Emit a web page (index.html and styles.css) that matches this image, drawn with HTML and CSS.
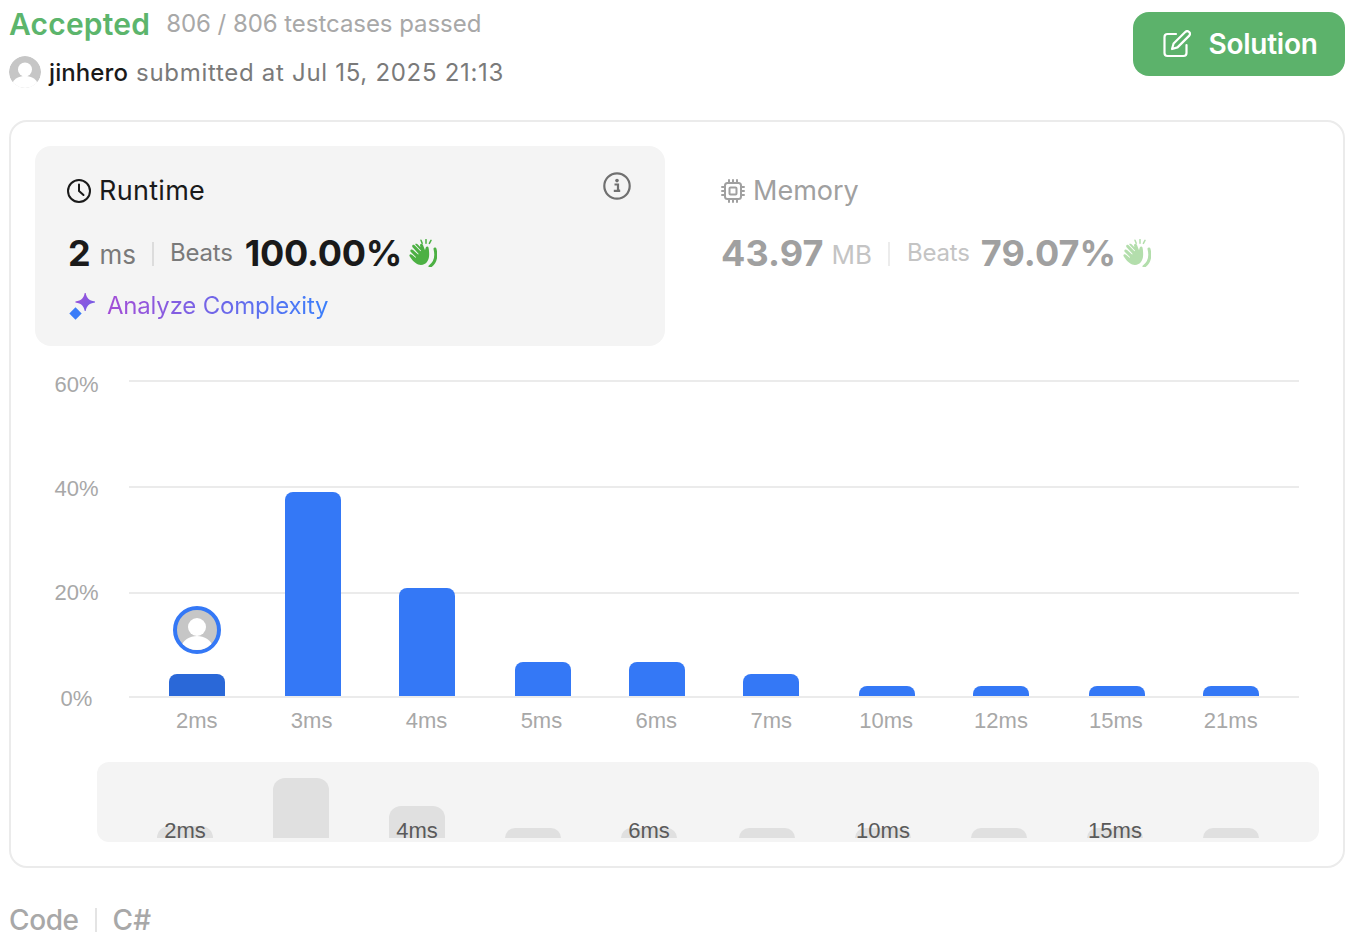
FILE: index.html
```html
<!DOCTYPE html>
<html lang="en">
<head>
<meta charset="utf-8">
<title>Submission</title>
<link rel="stylesheet" href="styles.css">
</head>
<body>
<svg class="defs" width="0" height="0" aria-hidden="true">
  <defs>
    <symbol id="clap" viewBox="0 0 28 28">
      <g fill="none" stroke="currentColor" stroke-linecap="round">
        <path d="M12 1.200l1.200 3M17 .6v3.600M22 1.400l-1.600 3" stroke-width="1.500"/>
        <path d="M26 10c1.500 6 1 13-5 17.400" stroke-width="3"/>
      </g>
      <path fill="currentColor" d="M6.400 5.300c.7-.7 1.700-.5 2.400.2l2.700 2.800-.4-1.600c-.3-1.100.3-1.900 1.100-2 .9-.2 1.400.4 1.800 1.400l2 5.200c.4-1.400.5-2.500 1-3.300.6-.8 2.200-.8 2.500.4.500 2.300.8 5.600.6 8.300-.3 4.300-2.600 9.200-8.200 9.200-3.800 0-6.300-2.500-8.600-4.900L.9 17.800c-.7-.8-.7-1.700 0-2.300.6-.5 1.400-.4 2.100.2l3.600 3.100.5-.5-5.200-5.200c-.7-.8-.8-1.700-.1-2.300.7-.6 1.500-.5 2.300.2l5 4.600.6-.6-5.900-6.400c-.7-.8-.9-1.800-.2-2.500.7-.6 1.600-.5 2.300.3l5.600 5.900.6-.5-5.400-5.900c-.4-.5-.7-.9-.3-1.600z"/>
    </symbol>
  </defs>
</svg>

<header class="head">
  <div class="head-text">
    <div class="status-row">
      <span class="accepted">Accepted</span>
      <span class="passed">806 / 806 testcases passed</span>
    </div>
    <div class="user-row">
      <svg class="avatar" viewBox="0 0 32 32" aria-hidden="true">
        <circle cx="16" cy="16" r="16" fill="#c6c6c6"/>
        <circle cx="16" cy="13.500" r="7" fill="#fff"/>
        <path d="M3 28c2-6 8-8 13-8s11 2 13 8c-3 2.500-8 4-13 4s-10-1.500-13-4z" fill="#fff"/>
      </svg>
      <span class="user">jinhero</span>
      <span class="submitted">submitted at Jul 15, 2025 21:13</span>
    </div>
  </div>
  <button class="solution" type="button">
    <svg class="solution-icon" viewBox="0 0 28 28" fill="none" stroke="#fff" stroke-width="2.200" stroke-linecap="round" stroke-linejoin="round" aria-hidden="true">
      <path d="M13 4H4.500A3 3 0 0 0 1.500 7v16a3 3 0 0 0 3 3h16a3 3 0 0 0 3-3v-8"/>
      <path d="M22.500 1.800a2.700 2.700 0 0 1 3.800 3.800L14.500 17.400 9 19l1.600-5.500z"/>
    </svg>
    <span>Solution</span>
  </button>
</header>

<main class="card">
  <section class="stats">
    <div class="stat stat-active">
      <div class="stat-title">
        <svg class="title-icon" viewBox="0 0 24 24" fill="none" stroke="currentColor" stroke-width="2" stroke-linecap="round" stroke-linejoin="round" aria-hidden="true">
          <circle cx="12" cy="12" r="11"/>
          <path d="M12 5.500V12l4.500 4"/>
        </svg>
        <span>Runtime</span>
        <svg class="info" viewBox="0 0 28 28" fill="none" aria-hidden="true">
          <circle cx="14" cy="14" r="12.700" stroke="#707070" stroke-width="2.200"/>
          <circle cx="14" cy="8.600" r="1.800" fill="#707070"/>
          <path d="M11.500 12.500h3.500v6.200h2M10.800 18.900h6.400" stroke="#707070" stroke-width="2.200"/>
        </svg>
      </div>
      <div class="stat-values">
        <span class="num">2</span>
        <span class="unit">ms</span>
        <span class="sep"></span>
        <span class="beats">Beats</span>
        <span class="num">100.00%</span>
        <svg class="clap" aria-hidden="true"><use href="#clap"/></svg>
      </div>
      <a class="analyze" href="#">
        <svg class="spark" viewBox="0 0 28 28" aria-hidden="true">
          <defs>
            <linearGradient id="sparkA" x1="0" y1="0" x2="1" y2="1">
              <stop offset="0" stop-color="#a351d8"/>
              <stop offset="1" stop-color="#6a5ee8"/>
            </linearGradient>
          </defs>
          <path d="M16.700 0c.9 4.600 3 7.600 9.300 8.500v1c-6.300.9-8.400 3.900-9.300 8.500h-1c-.9-4.600-3-7.600-9.300-8.500v-1c6.300-.9 8.400-3.900 9.300-8.500z" fill="url(#sparkA)"/>
          <path d="M6.500 14.200l6.200 6.300-6.200 6.300L.3 20.500z" fill="#3a7cf8"/>
        </svg>
        <span class="analyze-text">Analyze Complexity</span>
      </a>
    </div>
    <div class="stat stat-muted">
      <div class="stat-title">
        <svg class="title-icon" viewBox="0 0 24 24" fill="none" stroke="currentColor" stroke-width="2" stroke-linecap="round" aria-hidden="true">
          <rect x="4" y="4" width="16" height="16" rx="2.500"/>
          <rect x="8.500" y="8.500" width="7" height="7" rx="1"/>
          <path d="M8 1v2M12 1v2M16 1v2M8 21v2M12 21v2M16 21v2M1 8h2M1 12h2M1 16h2M21 8h2M21 12h2M21 16h2"/>
        </svg>
        <span>Memory</span>
      </div>
      <div class="stat-values">
        <span class="num">43.97</span>
        <span class="unit">MB</span>
        <span class="sep"></span>
        <span class="beats">Beats</span>
        <span class="num">79.07%</span>
        <svg class="clap" aria-hidden="true"><use href="#clap"/></svg>
      </div>
    </div>
  </section>

  <section class="chart">
    <div class="y-axis">
      <span>60%</span><span>40%</span><span>20%</span><span>0%</span>
    </div>
    <div class="chart-main">
      <div class="plot">
        <div class="gridlines">
          <i></i><i></i><i></i><i></i>
        </div>
        <div class="bars">
          <div class="col">
            <svg class="marker" viewBox="0 0 48 48" aria-hidden="true">
              <circle cx="24" cy="24" r="22" fill="#c6c6c6" stroke="#3478f6" stroke-width="4"/>
              <clipPath id="markerClip"><circle cx="24" cy="24" r="20"/></clipPath>
              <g clip-path="url(#markerClip)" fill="#fff">
                <circle cx="24" cy="21" r="9"/>
                <path d="M8 42c1-8 9-12 16-12s15 4 16 12v6H8z"/>
              </g>
            </svg>
            <div class="bar bar-current" style="height:22px"></div>
          </div>
          <div class="col"><div class="bar" style="height:204px"></div></div>
          <div class="col"><div class="bar" style="height:108px"></div></div>
          <div class="col"><div class="bar" style="height:34px"></div></div>
          <div class="col"><div class="bar" style="height:34px"></div></div>
          <div class="col"><div class="bar" style="height:22px"></div></div>
          <div class="col"><div class="bar" style="height:10px"></div></div>
          <div class="col"><div class="bar" style="height:10px"></div></div>
          <div class="col"><div class="bar" style="height:10px"></div></div>
          <div class="col"><div class="bar" style="height:10px"></div></div>
        </div>
      </div>
      <div class="x-axis">
        <span>2ms</span><span>3ms</span><span>4ms</span><span>5ms</span><span>6ms</span>
        <span>7ms</span><span>10ms</span><span>12ms</span><span>15ms</span><span>21ms</span>
      </div>
    </div>
  </section>

  <section class="mini">
    <div class="mini-col"><div class="mini-bar" style="height:12px"></div><span class="mini-label">2ms</span></div>
    <div class="mini-col"><div class="mini-bar" style="height:60px"></div></div>
    <div class="mini-col"><div class="mini-bar" style="height:32px"></div><span class="mini-label">4ms</span></div>
    <div class="mini-col"><div class="mini-bar" style="height:10px"></div></div>
    <div class="mini-col"><div class="mini-bar" style="height:10px"></div><span class="mini-label">6ms</span></div>
    <div class="mini-col"><div class="mini-bar" style="height:10px"></div></div>
    <div class="mini-col"><div class="mini-bar" style="height:10px"></div><span class="mini-label">10ms</span></div>
    <div class="mini-col"><div class="mini-bar" style="height:10px"></div></div>
    <div class="mini-col"><div class="mini-bar" style="height:10px"></div><span class="mini-label">15ms</span></div>
    <div class="mini-col"><div class="mini-bar" style="height:10px"></div></div>
  </section>
</main>

<footer class="code-head">
  <span>Code</span>
  <span class="code-sep"></span>
  <span class="code-lang">C#</span>
</footer>
</body>
</html>
```

FILE: styles.css
```css
* {
  box-sizing: border-box;
}

html,
body {
  height: 944px;
  margin: 0;
  overflow: hidden;
}

body {
  padding: 0 9px;
  background: #fff;
  color: #1a1a1a;
  font-family: Inter, "Noto Sans", "Liberation Sans", sans-serif;
}

.defs {
  position: absolute;
}

.head {
  display: flex;
  justify-content: space-between;
  height: 120px;
  padding-top: 12px;
}

.head-text {
  display: flex;
  flex-direction: column;
  margin-left: 1px;
  margin-top: -2px;
}

.status-row {
  display: flex;
  align-items: center;
  gap: 16px;
  height: 28px;
}

.accepted {
  margin-left: -1px;
  color: #5cb56c;
  font-size: 30px;
  font-weight: 600;
  line-height: 28px;
  letter-spacing: 0.2px;
}

.passed {
  color: #a8a8a8;
  font-size: 24px;
  line-height: 28px;
  letter-spacing: -0.05px;
}

.user-row {
  display: flex;
  align-items: center;
  height: 32px;
  margin-top: 18px;
  margin-left: -1px;
  font-size: 24px;
}

.avatar {
  width: 32px;
  height: 32px;
  margin-right: 8px;
  border-radius: 50%;
}

.user {
  font-weight: 500;
  margin-right: 8px;
  letter-spacing: 0.1px;
}

.submitted {
  color: #7a7a7a;
  letter-spacing: 0.7px;
}

.solution {
  display: flex;
  align-items: center;
  justify-content: center;
  gap: 17px;
  width: 212px;
  height: 64px;
  padding: 0 0 0 3px;
  border: 0;
  border-radius: 16px;
  background: #5cb26b;
  color: #fff;
  font-family: inherit;
  font-size: 28px;
  font-weight: 600;
  letter-spacing: -0.25px;
}

.solution-icon {
  width: 28px;
  height: 28px;
}

.card {
  width: 1336px;
  height: 748px;
  padding: 24px 24px 0;
  border: 2px solid #ebebeb;
  border-radius: 18px;
}

.stats {
  display: flex;
  height: 200px;
}

.stat {
  width: 630px;
  height: 200px;
  padding: 27px 32px 0;
}

.stat-active {
  border-radius: 16px;
  background: #f4f4f4;
}

.stat-active .stat-title {
  letter-spacing: 0.3px;
}

.stat-muted {
  margin-left: 24px;
  color: #a0a0a0;
}

.stat-title {
  position: relative;
  display: flex;
  align-items: center;
  gap: 8px;
  height: 36px;
  font-size: 27px;
  line-height: 36px;
}

.title-icon {
  width: 24px;
  height: 24px;
  flex: none;
}

.info {
  position: absolute;
  top: -1px;
  right: 2px;
  width: 28px;
  height: 28px;
}

.stat-values {
  display: flex;
  align-items: baseline;
  height: 44px;
  margin-top: 22px;
  margin-left: 1px;
  line-height: 44px;
}

.num {
  font-size: 36px;
  font-weight: 700;
  letter-spacing: -0.25px;
}

.unit {
  align-self: center;
  margin-top: 4px;
  margin-left: 9px;
  color: #7a7a7a;
  font-size: 26px;
}

.sep {
  align-self: center;
  width: 2px;
  height: 24px;
  margin: 2px 16px 0;
  background: #dcdcdc;
}

.beats {
  align-self: center;
  margin-right: 12px;
  color: #7a7a7a;
  font-size: 24px;
  line-height: 28px;
  letter-spacing: -0.2px;
}

.clap {
  width: 28px;
  height: 28px;
  margin-left: 7px;
  align-self: center;
  color: #4cb043;
}

.stat-muted .stat-values {
  margin-left: 0;
}

.stat-muted .num {
  letter-spacing: 0.1px;
}

.stat-muted .unit {
  margin-left: 8px;
}

.stat-muted .unit,
.stat-muted .beats {
  color: #c4c4c4;
}

.stat-muted .sep {
  margin-right: 17px;
  background: #ececec;
}

.stat-muted .beats {
  margin-right: 11px;
}

.stat-muted .clap {
  color: #b3deac;
}

.analyze {
  display: flex;
  align-items: center;
  gap: 10px;
  height: 36px;
  margin-top: 12px;
  margin-left: 2px;
  text-decoration: none;
}

.spark {
  width: 28px;
  height: 28px;
  flex: none;
  margin-top: 4px;
}

.analyze-text {
  background: linear-gradient(90deg, #a44ed6, #3a7ffb);
  -webkit-background-clip: text;
  background-clip: text;
  color: transparent;
  font-size: 24px;
  letter-spacing: -0.2px;
}

.chart {
  display: flex;
  margin-top: 25px;
  margin-left: -24px;
  color: #a8a8a8;
  font-family: "Liberation Sans", Arial, sans-serif;
  font-size: 22px;
}

.y-axis {
  display: grid;
  grid-template-rows: 104px 104px 106px 28px;
  justify-items: center;
  width: 131px;
  line-height: 28px;
}

.chart-main {
  width: 1170px;
  margin-left: -13px;
  padding-top: 9px;
}

.plot {
  position: relative;
  height: 318px;
}

.gridlines {
  position: absolute;
  inset: 0;
  display: grid;
  grid-template-rows: 106px 106px 104px 2px;
}

.gridlines i {
  display: block;
  height: 2px;
  background: #ebebeb;
}

.bars {
  position: relative;
  display: grid;
  grid-template-columns: 116px 114px 116px 114px 114px 116px 114px 116px 114px 56px;
  height: 316px;
  padding-left: 40px;
}

.col {
  display: flex;
  flex-direction: column;
  align-items: flex-start;
  justify-content: flex-end;
}

.x-axis span {
  text-align: center;
}

.bar {
  width: 56px;
  border-radius: 8px 8px 0 0;
  background: #3478f6;
}

.bar-current {
  background: #2a68d8;
}

.marker {
  width: 48px;
  height: 48px;
  margin-bottom: 20px;
  margin-left: 4px;
}

.x-axis {
  display: grid;
  grid-template-columns: repeat(10, 114.9px);
  height: 28px;
  margin-top: 9px;
  padding-left: 10.300px;
  line-height: 28px;
}

.mini {
  display: grid;
  grid-template-columns: repeat(4, 116px) 118px repeat(4, 116px) 56px;
  width: 1222px;
  height: 80px;
  margin-top: 27px;
  margin-left: 62px;
  padding: 0 0 4px 60px;
  overflow: hidden;
  border-radius: 12px;
  background: #f4f4f4;
}

.mini-col {
  position: relative;
  display: flex;
  align-items: flex-end;
  justify-content: flex-start;
}

.mini-bar {
  width: 56px;
  border-radius: 12px 12px 0 0;
  background: #e0e0e0;
}

.mini-label {
  position: absolute;
  bottom: -7px;
  left: 0;
  width: 56px;
  color: #5a5a5a;
  font-family: "Liberation Sans", Arial, sans-serif;
  font-size: 22px;
  line-height: 28px;
  text-align: center;
}

.code-head {
  display: flex;
  align-items: center;
  height: 36px;
  margin-top: 34px;
  color: #a8a8a8;
  font-size: 28px;
  font-weight: 500;
}

.code-head span:first-child {
  letter-spacing: -0.4px;
}

.code-sep {
  width: 2px;
  height: 24px;
  margin: 0 16px;
  background: #e4e4e4;
}
```
